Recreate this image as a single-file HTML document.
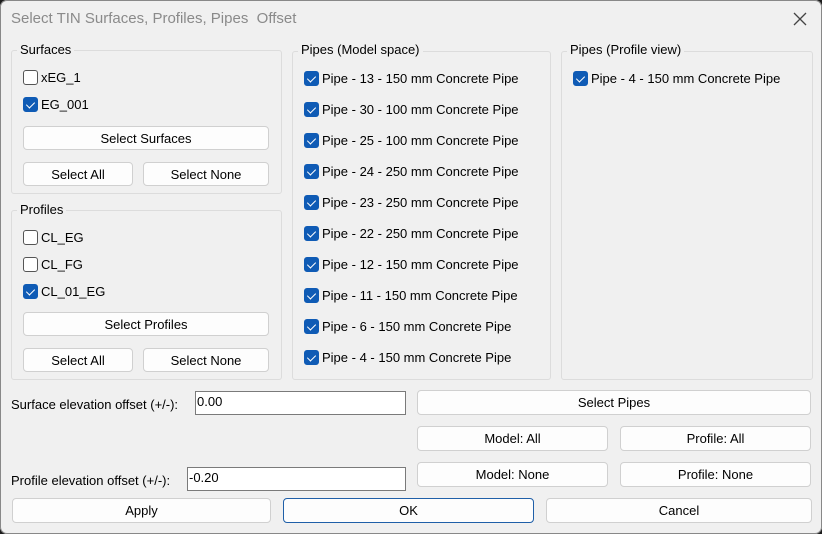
<!DOCTYPE html><html><head><style>
*{box-sizing:border-box}
body{margin:0;width:822px;height:534px;background:#1c1c1c;font-family:"Liberation Sans",sans-serif;font-size:13px;color:#000;overflow:hidden}
#w{position:absolute;left:0;top:0;width:822px;height:534px;background:#f0f0f0;border-radius:7px;box-shadow:inset 0 0 0 1px #888}
.a{position:absolute;white-space:nowrap}
.g{position:absolute;border:1px solid #dcdcdc;border-radius:3px}
.gl{position:absolute;background:#f0f0f0;padding:0 3px;line-height:16px}
.b{position:absolute;background:#fdfdfd;border:1px solid #d0d0d0;border-radius:4px;text-align:center;line-height:24px}
.cb{position:absolute;width:15px;height:15px;border-radius:3px;border:1px solid #555;background:#fff}
.cb.c{background:#0f5bb5;border-color:#0f5bb5}
.cb.c:after{content:"";position:absolute;left:4px;top:2px;width:4px;height:7px;border:solid #fff;border-width:0 1.3px 1.3px 0;transform:rotate(45deg)}
.t{position:absolute;line-height:16px;white-space:nowrap;padding-top:1px}
.in{position:absolute;background:#fff;border:1px solid #7a7a7a;padding-left:1px;line-height:20px}
</style></head><body><div id="w">
<div class="a" style="left:11px;top:10px;font-size:15px;color:#8a8a8a">Select TIN Surfaces, Profiles, Pipes&nbsp; Offset</div>
<svg class="a" style="left:793px;top:12px" width="14" height="14"><path d="M1 1L13 13M13 1L1 13" stroke="#444" stroke-width="1.3"/></svg>

<div class="g" style="left:11px;top:50px;width:271px;height:144px"></div><div class="gl" style="left:17px;top:42px">Surfaces</div>
<div class="cb" style="left:23px;top:70px"></div><div class="t" style="left:41px;top:69px">xEG_1</div>
<div class="cb c" style="left:23px;top:97px"></div><div class="t" style="left:41px;top:96px">EG_001</div>
<div class="b" style="left:23px;top:126px;width:246px;height:24px">Select Surfaces</div>
<div class="b" style="left:23px;top:162px;width:110px;height:24px">Select All</div>
<div class="b" style="left:143px;top:162px;width:126px;height:24px">Select None</div>

<div class="g" style="left:11px;top:210px;width:271px;height:170px"></div><div class="gl" style="left:17px;top:202px">Profiles</div>
<div class="cb" style="left:23px;top:230px"></div><div class="t" style="left:41px;top:229px">CL_EG</div>
<div class="cb" style="left:23px;top:257px"></div><div class="t" style="left:41px;top:256px">CL_FG</div>
<div class="cb c" style="left:23px;top:284px"></div><div class="t" style="left:41px;top:283px">CL_01_EG</div>
<div class="b" style="left:23px;top:312px;width:246px;height:24px">Select Profiles</div>
<div class="b" style="left:23px;top:348px;width:110px;height:24px">Select All</div>
<div class="b" style="left:143px;top:348px;width:126px;height:24px">Select None</div>

<div class="g" style="left:292px;top:51px;width:259px;height:329px"></div><div class="gl" style="left:298px;top:42px">Pipes (Model space)</div>
<div class="g" style="left:561px;top:51px;width:252px;height:329px"></div><div class="gl" style="left:567px;top:42px">Pipes (Profile view)</div>
<div class="cb c" style="left:573px;top:71px"></div><div class="t" style="left:591px;top:70px">Pipe - 4 - 150 mm Concrete Pipe</div>

<div class="cb c" style="left:304px;top:71px"></div><div class="t" style="left:322px;top:70px">Pipe - 13 - 150 mm Concrete Pipe</div>
<div class="cb c" style="left:304px;top:102px"></div><div class="t" style="left:322px;top:101px">Pipe - 30 - 100 mm Concrete Pipe</div>
<div class="cb c" style="left:304px;top:133px"></div><div class="t" style="left:322px;top:132px">Pipe - 25 - 100 mm Concrete Pipe</div>
<div class="cb c" style="left:304px;top:164px"></div><div class="t" style="left:322px;top:163px">Pipe - 24 - 250 mm Concrete Pipe</div>
<div class="cb c" style="left:304px;top:195px"></div><div class="t" style="left:322px;top:194px">Pipe - 23 - 250 mm Concrete Pipe</div>
<div class="cb c" style="left:304px;top:226px"></div><div class="t" style="left:322px;top:225px">Pipe - 22 - 250 mm Concrete Pipe</div>
<div class="cb c" style="left:304px;top:257px"></div><div class="t" style="left:322px;top:256px">Pipe - 12 - 150 mm Concrete Pipe</div>
<div class="cb c" style="left:304px;top:288px"></div><div class="t" style="left:322px;top:287px">Pipe - 11 - 150 mm Concrete Pipe</div>
<div class="cb c" style="left:304px;top:319px"></div><div class="t" style="left:322px;top:318px">Pipe - 6 - 150 mm Concrete Pipe</div>
<div class="cb c" style="left:304px;top:350px"></div><div class="t" style="left:322px;top:349px">Pipe - 4 - 150 mm Concrete Pipe</div>

<div class="t" style="left:11px;top:396px">Surface elevation offset (+/-):</div>
<div class="in" style="left:195px;top:391px;width:211px;height:24px">0.00</div>
<div class="t" style="left:11px;top:472px">Profile elevation offset (+/-):</div>
<div class="in" style="left:187px;top:467px;width:219px;height:24px">-0.20</div>

<div class="b" style="left:417px;top:390px;width:394px;height:25px">Select Pipes</div>
<div class="b" style="left:417px;top:426px;width:191px;height:25px">Model: All</div>
<div class="b" style="left:620px;top:426px;width:191px;height:25px">Profile: All</div>
<div class="b" style="left:417px;top:462px;width:191px;height:25px">Model: None</div>
<div class="b" style="left:620px;top:462px;width:191px;height:25px">Profile: None</div>

<div class="b" style="left:12px;top:498px;width:259px;height:25px">Apply</div>
<div class="b" style="left:283px;top:498px;width:251px;height:25px;border-color:#1f5fa8">OK</div>
<div class="b" style="left:546px;top:498px;width:266px;height:25px">Cancel</div>
</div></body></html>
